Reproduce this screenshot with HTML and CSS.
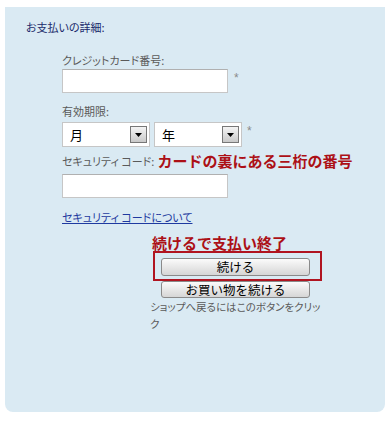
FILE: index.html
```html
<!DOCTYPE html>
<html lang="ja">
<head>
<meta charset="utf-8">
<title>お支払いの詳細</title>
<link rel="stylesheet" href="styles.css">
</head>
<body>
<div class="panel">
  <div class="heading">お支払いの詳細:</div>
  <div class="form">
    <div class="label">クレジットカード番号:</div>
    <div class="row"><input class="text" type="text"><span class="req">*</span></div>
    <div class="label label-gap">有効期限:</div>
    <div class="row selects">
      <div class="select"><span class="val">月</span><span class="arrow"><svg width="7" height="4" viewBox="0 0 7 4"><path d="M0 0H7L3.5 4Z" fill="#000"/></svg></span></div>
      <div class="select"><span class="val">年</span><span class="arrow"><svg width="7" height="4" viewBox="0 0 7 4"><path d="M0 0H7L3.5 4Z" fill="#000"/></svg></span></div>
      <span class="req">*</span>
    </div>
    <div class="secrow"><span class="label">セキュリティ コード:</span><span class="hint">カードの裏にある三桁の番号</span></div>
    <div class="row row-tight"><input class="text" type="text"></div>
    <a class="link" href="#">セキュリティ コードについて</a>
    <div class="actions">
      <div class="hint hint-block">続けるで支払い終了</div>
      <div class="redbox"><button class="btn" type="button">続ける</button></div>
      <button class="btn btn2" type="button">お買い物を続ける</button>
      <p class="note">ショップへ戻るにはこのボタンをクリック</p>
    </div>
  </div>
</div>
</body>
</html>
```
FILE: styles.css
```css
html, body {
  margin: 0;
  padding: 0;
  background: #ffffff;
}
body {
  font-family: "Noto Sans CJK JP", "Liberation Sans", sans-serif;
  font-size: 11px;
}
.panel {
  box-sizing: border-box;
  margin: 7px 0 0 5px;
  width: 380px;
  height: 405px;
  background: #daeaf3;
  border-radius: 0 0 8px 8px;
  padding: 12px 0 0 21px;
}
.heading {
  line-height: 16px;
  color: #1b2a6b;
  font-feature-settings: "palt";
}
.form {
  margin: 17px 0 0 36px;
}
.label {
  line-height: 16px;
  color: #5a5a5a;
  font-feature-settings: "palt";
}
.label-gap {
  margin-top: 10px;
}
.row {
  display: flex;
  align-items: flex-start;
  margin-top: 1px;
}
.row-tight {
  margin-top: 4px;
}
.text {
  box-sizing: border-box;
  width: 166px;
  height: 24px;
  margin: 0;
  padding: 2px 4px;
  border: 1px solid #c6c6c6;
  border-top-color: #b0b0b0;
  background: #ffffff;
  font: inherit;
}
.req {
  font-family: "Liberation Sans", sans-serif;
  color: #8a8a8a;
  font-size: 12px;
  line-height: 12px;
  margin: 3px 0 0 6px;
}
.selects {
  margin-top: 3px;
  gap: 4px;
}
.selects .req {
  margin-left: 1px;
}
.select {
  box-sizing: border-box;
  width: 88px;
  height: 25px;
  display: flex;
  align-items: center;
  justify-content: space-between;
  background: #ffffff;
  border: 1px solid #c6c6c6;
  padding: 0 2px 0 7px;
}
.val {
  font-size: 13px;
  color: #000;
}
.arrow {
  box-sizing: border-box;
  width: 17px;
  height: 17px;
  display: flex;
  align-items: center;
  justify-content: center;
  border: 1px solid #777;
  background: linear-gradient(#f4f4f4, #c9c9c9);
}
.arrow svg {
  display: block;
  margin-top: 1px;
}
.secrow {
  display: flex;
  align-items: center;
  margin-top: 5px;
  height: 18px;
}
.secrow .label {
  margin-right: 3px;
}
.hint {
  color: #ac1016;
  font-weight: bold;
  font-size: 15px;
  line-height: 18px;
}
.link {
  display: block;
  width: max-content;
  margin-top: 11px;
  line-height: 16px;
  color: #1f3aa0;
  text-decoration: underline;
  font-feature-settings: "palt";
}
.actions {
  margin: 10px 0 0 88px;
  width: 174px;
}
.hint-block {
  line-height: 16px;
  margin-left: 2px;
}
.redbox {
  box-sizing: border-box;
  width: 169px;
  height: 30px;
  margin-left: 3px;
  border: 2px solid #b01420;
  padding: 5px 0 0 6px;
}
.btn {
  box-sizing: border-box;
  display: block;
  width: 149px;
  height: 18px;
  margin: 0;
  padding: 0;
  border: 1px solid #8a8a8a;
  border-radius: 3px;
  background: linear-gradient(#fbfbfb, #e6e6e6 55%, #d6d6d6);
  font-family: "Noto Sans CJK JP", sans-serif;
  font-size: 12.5px;
  line-height: 16px;
  color: #000;
}
.btn2 {
  margin-left: 11px;
  height: 17px;
}
.note {
  margin: 0;
  font-size: 10.5px;
  line-height: 17px;
  color: #5a5a5a;
  font-feature-settings: "palt";
}
```
